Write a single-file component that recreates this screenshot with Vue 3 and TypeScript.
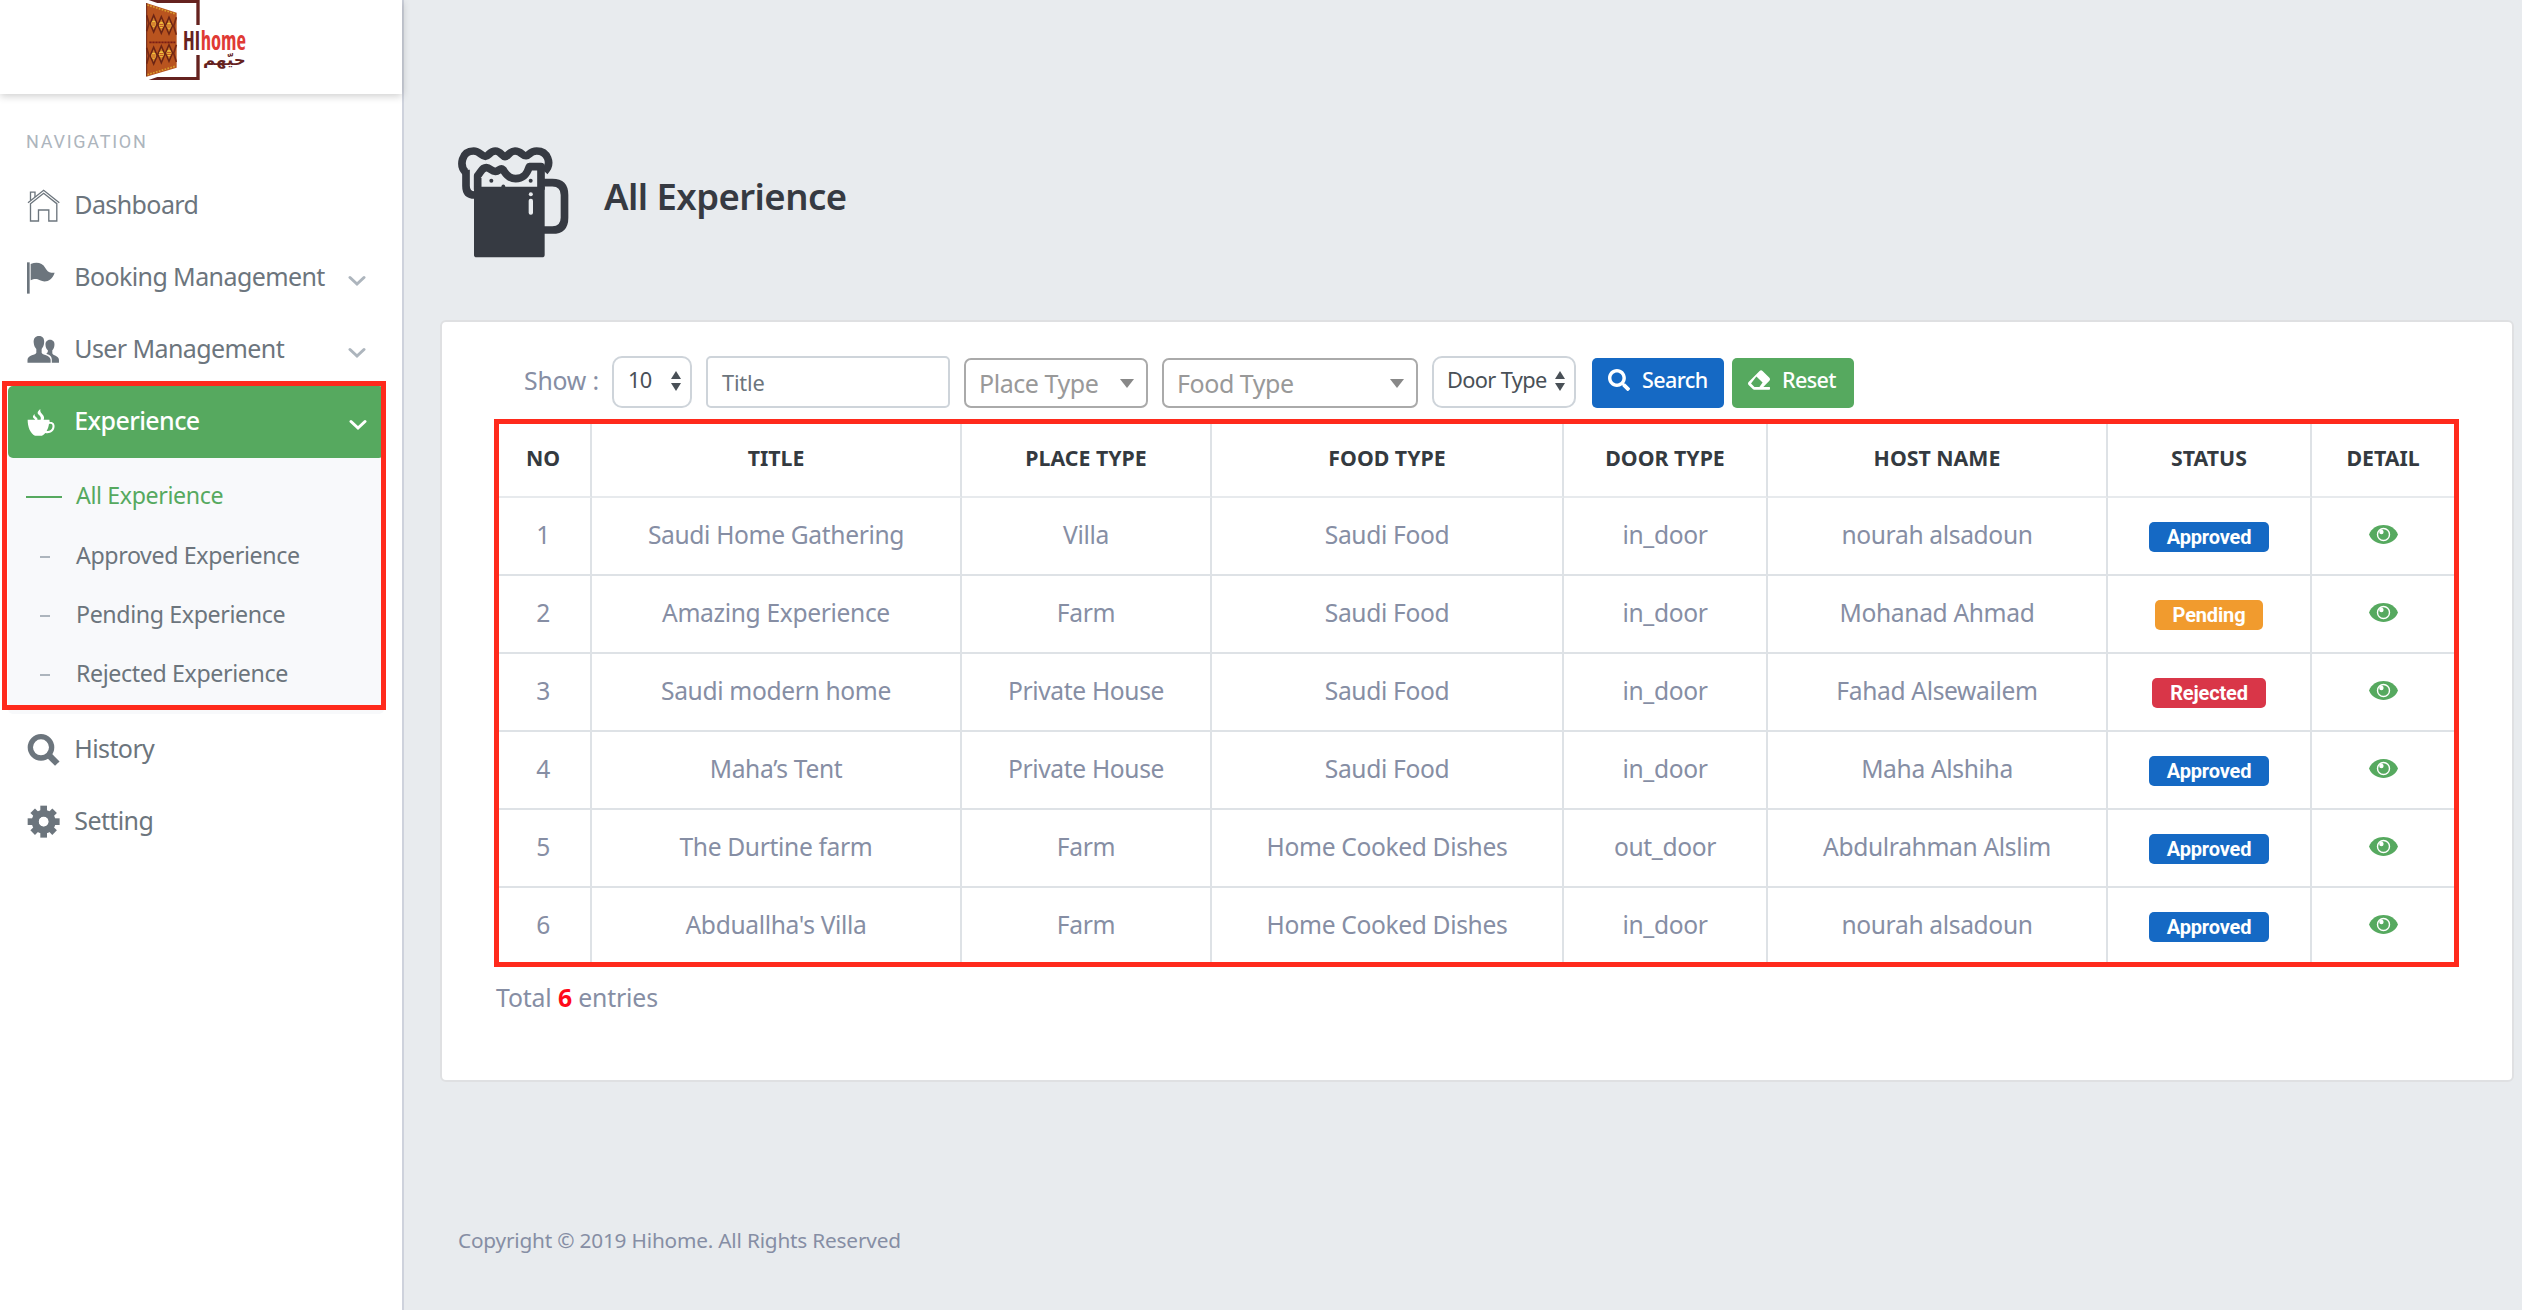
<script setup lang="ts">
interface Row {
  no: number
  title: string
  place: string
  food: string
  door: string
  host: string
  status: 'Approved' | 'Pending' | 'Rejected'
}

const columns: { label: string; width: number }[] = [
  { label: 'NO', width: 96 },
  { label: 'TITLE', width: 370 },
  { label: 'PLACE TYPE', width: 250 },
  { label: 'FOOD TYPE', width: 352 },
  { label: 'DOOR TYPE', width: 204 },
  { label: 'HOST NAME', width: 340 },
  { label: 'STATUS', width: 204 },
  { label: 'DETAIL', width: 144 },
]

const rows: Row[] = [
  { no: 1, title: 'Saudi Home Gathering', place: 'Villa', food: 'Saudi Food', door: 'in_door', host: 'nourah alsadoun', status: 'Approved' },
  { no: 2, title: 'Amazing Experience', place: 'Farm', food: 'Saudi Food', door: 'in_door', host: 'Mohanad Ahmad', status: 'Pending' },
  { no: 3, title: 'Saudi modern home', place: 'Private House', food: 'Saudi Food', door: 'in_door', host: 'Fahad Alsewailem', status: 'Rejected' },
  { no: 4, title: 'Maha’s Tent', place: 'Private House', food: 'Saudi Food', door: 'in_door', host: 'Maha Alshiha', status: 'Approved' },
  { no: 5, title: 'The Durtine farm', place: 'Farm', food: 'Home Cooked Dishes', door: 'out_door', host: 'Abdulrahman Alslim', status: 'Approved' },
  { no: 6, title: "Abduallha's Villa", place: 'Farm', food: 'Home Cooked Dishes', door: 'in_door', host: 'nourah alsadoun', status: 'Approved' },
]

const subItems = ['All Experience', 'Approved Experience', 'Pending Experience', 'Rejected Experience']
const gearTeeth = [0, 45, 90, 135, 180, 225, 270, 315]
const motifs = [
  { x: 23, y: 71 }, { x: 46, y: 75 }, { x: 69, y: 77 },
  { x: 23, y: 167 }, { x: 46, y: 163 }, { x: 69, y: 159 },
]
</script>

<template>
  <div class="app">
    <aside class="sidebar">
      <header class="brand">
        <svg class="logo" viewBox="0 0 324 240" width="108" height="80">
          <path d="M8 0 H161 V75 H151 V9 H34 Z" fill="#65221f" />
          <path d="M8 240 H161 V165 H151 V231 H34 Z" fill="#65221f" />
          <path d="M1 9 L92 38 V203 L1 230 Z" fill="#b9541f" />
          <path d="M4 15 L90 42 M4 224 L90 198" stroke="#d9a02e" stroke-width="5" stroke-dasharray="5 4" fill="none" />
          <path d="M10 127 H88" stroke="#7a1d15" stroke-width="5" stroke-dasharray="7 2" />
          <g v-for="(m, i) in motifs" :key="i" :transform="`translate(${m.x} ${m.y})`">
            <path d="M0 -31 L13 0 L0 31 L-13 0 Z" fill="#6b2415" />
            <path d="M0 -19 L8 0 L0 19 L-8 0 Z" fill="#cf7a28" />
            <ellipse rx="7" ry="9" fill="#f1c63f" />
            <path d="M-6 -2 H6 M-6 4 H6" stroke="#b3261b" stroke-width="2.5" />
          </g>
          <path d="M2 46 L9 70 L2 94 M2 143 L9 167 L2 191 M91 52 L83 78 L91 104 M91 134 L83 160 L91 186" fill="none" stroke="#7a2a14" stroke-width="5" />
          <path d="M2 9 V229" stroke="#6b2415" stroke-width="3" />
          <text class="latin" x="111" y="149" textLength="51" lengthAdjust="spacingAndGlyphs" fill="#65221f">HI</text>
          <text class="latin" x="164" y="149" textLength="136" lengthAdjust="spacingAndGlyphs" fill="#e03a35">home</text>
          <text class="arabic" x="235" y="194" text-anchor="middle" textLength="128" lengthAdjust="spacingAndGlyphs" fill="#65221f">حيّهم</text>
        </svg>
      </header>

      <nav class="nav">
        <p class="caption">NAVIGATION</p>

        <a class="item">
          <svg class="icon" viewBox="82 568 100 100" fill="none" stroke="currentColor" stroke-width="4">
            <path d="M85 609 L132 572 L179 609" />
            <path d="M92.500 612 L132 581 L171.500 612 V664 H147.500 V631 H116.500 V664 H92.500 Z" />
            <path d="M92.500 602 V577.500 H106 V592" />
          </svg>
          <span class="label">Dashboard</span>
        </a>
        <a class="item">
          <svg class="icon" viewBox="82 784 100 100" fill="currentColor">
            <path d="M82 788 h8 v94 h-8 Z" />
            <path d="M93 793 C111 786 128 789 137 805 C145 819 152 820 165 819 C158 841 139 851 121 842 C111 836 103 837 93 842 Z" />
          </svg>
          <span class="label">Booking Management</span>
          <svg class="chevron" viewBox="0 0 18 12"><path d="M2 2.500 L9 9 L16 2.500" /></svg>
        </a>
        <a class="item">
          <svg class="icon" viewBox="82 1002 100 100" fill="currentColor">
            <path d="M118 1011 C129 1011 134.500 1018 133.500 1030 C133 1041 129 1046 126 1050 V1061 C127 1068 152 1068 153 1082 V1091.500 H83.500 V1082 C84 1068 109 1068 110 1061 V1050 C106 1046 103 1041 102 1030 C101.500 1018 107 1011 118 1011 Z" />
            <path d="M151 1022 C161 1022 165 1029 164.500 1037 C164 1046 161 1050 158 1054 V1063 C159 1070 177 1070 178 1082 V1091.500 H156.500 V1081 C156 1070 148 1067 140 1064 C145 1061 145 1057 144.500 1054 C140 1050 138 1045 137.500 1037 C137 1029 142 1022 151 1022 Z" />
          </svg>
          <span class="label">User Management</span>
          <svg class="chevron" viewBox="0 0 18 12"><path d="M2 2.500 L9 9 L16 2.500" /></svg>
        </a>

        <div class="group">
          <a class="item active">
            <svg class="icon" viewBox="82 106 100 100" fill="currentColor">
              <path d="M84 150 H149 C150 153 150 155 150 157 C161 155 166 163 164.500 173 C163 186 151 193 137 190 C133 194 130 197 127 198.500 H106 C92 191 84 172 84 150 Z M148 163 C147 172 144 179 141 184 C150 185 157 180 158.500 172 C159.500 164 156 161 148 163 Z" fill-rule="evenodd" />
              <path d="M122 118 C112 127 112 131 119 137 C124 142 125 146 122 153 H131 C135 145 134 140 128 134 C123 129 121 125 122 118 Z" />
              <path d="M105 133 C98 140 99 143 104 147 C107 150 107 152 106 154 H112 C115 149 114 146 109 142 C105 139 104 137 105 133 Z" />
            </svg>
            <span class="label">Experience</span>
            <svg class="chevron" viewBox="0 0 18 12"><path d="M2 2.500 L9 9 L16 2.500" /></svg>
          </a>
          <ul class="sub">
            <li v-for="(s, i) in subItems" :key="s" :class="{ current: i === 0 }">
              <span class="dash"></span><span>{{ s }}</span>
            </li>
          </ul>
          <div class="marker nav-marker"></div>
        </div>

        <a class="item">
          <svg class="icon" viewBox="82 92 100 100" fill="none" stroke="currentColor">
            <circle cx="124" cy="135" r="32" stroke-width="16" />
            <path d="M147 158 L173 184" stroke-width="19" />
          </svg>
          <span class="label">History</span>
        </a>
        <a class="item">
          <svg class="icon" viewBox="82 309 100 100">
            <g fill="currentColor" transform="translate(132 359)">
              <path v-for="a in gearTeeth" :key="a" d="M-10 -20 V-48 H10 V-20 Z" :transform="`rotate(${a}) scale(${a % 90 ? 0.97 : 1})`" />
            </g>
            <circle cx="132" cy="359" r="25" fill="none" stroke="currentColor" stroke-width="22" />
            <circle cx="132" cy="359" r="14.500" fill="#fff" />
          </svg>
          <span class="label">Setting</span>
        </a>
      </nav>
    </aside>

    <main class="main">
      <section class="heading">
        <svg class="mug" viewBox="84 82 333 333" width="111" height="111">
          <g fill="none" stroke="#363a42" stroke-width="23" stroke-linejoin="round">
            <path d="M106 157 C88 138 94 94 131 94 C148 94 156 110 166 110 C176 110 180 94 196 94 C212 94 216 111 225 111 C234 111 238 94 255 94 C274 94 278 110 289 108 C297 108 300 94 320 94 C352 94 368 130 344 156" />
            <path d="M108 150 V198 Q108 226 134 226" />
            <path d="M143 210 V168 C152 160 154 144 169 144 C181 144 184 156 197 155 C207 155 211 142 219 150 C225 158 232 177 257 177 C283 177 292 160 298 141 H333 V210" />
            <path d="M340 189 H367 Q403.500 189 403.500 226 V294 Q403.500 331 367 331 H340" />
          </g>
          <path d="M132 201 H344 V405 Q344 413 336 413 H140 Q132 413 132 405 Z" fill="#363a42" />
          <g fill="#363a42"><circle cx="184" cy="183" r="6" /><circle cx="302" cy="183" r="6" /><circle cx="220" cy="200" r="5.500" /></g>
          <circle cx="302.500" cy="224" r="6" fill="#e8ebee" />
          <rect x="296" y="237" width="13" height="48" rx="6" fill="#e8ebee" />
        </svg>
        <h1>All Experience</h1>
      </section>

      <section class="card">
        <div class="filters">
          <span class="show">Show :</span>
          <div class="select count"><span>10</span>
            <svg viewBox="0 0 10 20" width="10" height="20"><path d="M5 0 L10 8 H0 Z M0 12 H10 L5 20 Z" /></svg>
          </div>
          <div class="input">Title</div>
          <div class="combo place"><span>Place Type</span>
            <svg viewBox="0 0 14 9" width="14" height="9"><path d="M0 0 H14 L7 9 Z" /></svg>
          </div>
          <div class="combo food"><span>Food Type</span>
            <svg viewBox="0 0 14 9" width="14" height="9"><path d="M0 0 H14 L7 9 Z" /></svg>
          </div>
          <div class="select door"><span>Door Type</span>
            <svg viewBox="0 0 10 20" width="10" height="20"><path d="M5 0 L10 8 H0 Z M0 12 H10 L5 20 Z" /></svg>
          </div>
          <button class="btn search">
            <svg viewBox="0 0 512 512" width="22" height="22"><path fill="currentColor" d="M505 442.700L405.300 343c-4.500-4.500-10.600-7-17-7H372c27.600-35.300 44-79.700 44-128C416 93.100 322.900 0 208 0S0 93.100 0 208s93.100 208 208 208c48.300 0 92.700-16.400 128-44v16.300c0 6.400 2.500 12.500 7 17l99.700 99.700c9.400 9.400 24.600 9.400 33.900 0l28.300-28.300c9.400-9.400 9.400-24.600.1-34zM208 336c-70.700 0-128-57.200-128-128 0-70.700 57.200-128 128-128 70.700 0 128 57.200 128 128 0 70.700-57.200 128-128 128z" /></svg>
            <span>Search</span>
          </button>
          <button class="btn reset">
            <svg viewBox="0 32 512 448" width="22" height="20"><path fill="currentColor" d="M497.900 273.900c18.800-18.700 18.800-49.100 0-67.900l-160-160c-18.700-18.700-49.100-18.700-67.900 0l-256 256c-18.700 18.700-18.700 49.100 0 67.900l96 96A48 48 0 0 0 144 480h356c6.600 0 12-5.400 12-12v-40c0-6.600-5.400-12-12-12H355.900l142-142.100zM195.300 172.700L339.300 316.700 265.400 416H150.600l-80-80 124.700-163.300z" /></svg>
            <span>Reset</span>
          </button>
        </div>

        <div class="table-wrap">
          <table>
            <colgroup><col v-for="c in columns" :key="c.label" :style="{ width: c.width + 'px' }" /></colgroup>
            <thead><tr><th v-for="c in columns" :key="c.label">{{ c.label }}</th></tr></thead>
            <tbody>
              <tr v-for="r in rows" :key="r.no">
                <td>{{ r.no }}</td>
                <td>{{ r.title }}</td>
                <td>{{ r.place }}</td>
                <td>{{ r.food }}</td>
                <td>{{ r.door }}</td>
                <td>{{ r.host }}</td>
                <td><div class="cell"><span class="badge" :class="r.status.toLowerCase()">{{ r.status }}</span></div></td>
                <td>
                  <div class="cell">
                    <svg class="eye" viewBox="0 0 29 19" width="29" height="19">
                      <path d="M0 9.500 C5 -3.100 24 -3.100 29 9.500 C24 22.100 5 22.100 0 9.500 Z" fill="#56a95f" />
                      <circle cx="14.500" cy="9.500" r="6" fill="none" stroke="#fff" stroke-width="1.400" />
                      <circle cx="12.400" cy="7" r="2.200" fill="#fff" />
                    </svg>
                  </div>
                </td>
              </tr>
            </tbody>
          </table>
          <div class="marker table-marker"></div>
        </div>

        <p class="total">Total <b>6</b> entries</p>
      </section>

      <footer>Copyright © 2019 Hihome. All Rights Reserved</footer>
    </main>
  </div>
</template>

<style>
body { background: #e8ebee; }
</style>

<style scoped>
.app {
  display: flex;
  width: 2522px;
  height: 1310px;
  overflow: hidden;
  background: #e8ebee;
  font-family: 'Noto Sans', 'Open Sans', sans-serif;
  font-weight: 450;
  box-sizing: border-box;
}
.app * { box-sizing: border-box; }

.sidebar {
  flex: none;
  width: 404px;
  background: #fff;
  border-right: 2px solid #ced2dc;
}
.brand {
  position: relative;
  width: 402px;
  height: 94px;
  padding-left: 146px;
  background: #fff;
  box-shadow: 0 2px 8px rgba(0, 0, 0, 0.2);
}
.logo { display: block; overflow: visible; }
.latin { font: 700 80px 'Open Sans', sans-serif; font-stretch: 75%; }
.arabic { font: 700 44px 'DejaVu Sans', sans-serif; }

.caption {
  margin: 0;
  height: 76px;
  padding: 36px 0 0 26px;
  font: 400 18px/24px Roboto, sans-serif;
  letter-spacing: 1.75px;
  color: #adb5bd;
}
.item {
  display: flex;
  align-items: center;
  height: 72px;
  padding: 0 36px 0 27px;
  color: #6c757d;
}
.icon { width: 33.300px; height: 33.300px; margin-right: 14px; flex: none; }
.label {
  flex: 1;
  padding-bottom: 4px;
  font-size: 25px;
  line-height: 34px;
  letter-spacing: -0.6px;
  white-space: nowrap;
}
.chevron { width: 18px; height: 12px; margin-top: 6px; fill: none; stroke: #adb5bd; stroke-width: 3; stroke-linecap: round; }
.group { position: relative; width: 376px; margin-left: 8px; height: 328px; background: #f8f9fb; border-radius: 5px; }
.item.active {
  padding: 0 17px 0 19px;
  color: #fff;
  background: #56a95f;
  border-radius: 5px;
}
.item.active .label { font-weight: 500; }
.item.active .chevron { stroke: #fff; }

.sub { margin: 0; padding: 8px 0 0 18px; list-style: none; }
.sub li {
  display: flex;
  align-items: center;
  height: 60px;
  font-size: 23.200px;
  letter-spacing: -0.38px;
  color: #6c757d;
  padding-bottom: 2px;
}
.sub li:nth-child(3) { height: 58px; }
.dash { width: 10px; height: 2px; margin: 4px 26px 0 14px; background: #adb5bd; }
.sub li.current { color: #56a95f; }
.current .dash { width: 36px; margin: 4px 14px 0 0; background: #56a95f; }

.marker { position: absolute; border: 5px solid #ff2a1c; pointer-events: none; }
.nav-marker { left: -6px; top: -5px; width: 384px; height: 329px; }

.main { flex: 1; padding: 147px 8px 0 36px; }
.heading { display: flex; height: 173px; padding-left: 18px; }
.heading h1 {
  margin: 22px 0 0 35px;
  font-size: 36.500px;
  line-height: 54px;
  height: 54px;
  font-weight: 600;
  letter-spacing: -0.55px;
  color: #363a42;
}
.card {
  height: 762px;
  padding: 34px 52px 0;
  background: #fff;
  border: 2px solid #dfe0e2;
  border-radius: 6px;
}
.filters { display: flex; align-items: flex-end; height: 52px; padding-left: 30px; }
.show { width: 88px; line-height: 52px; font-size: 24.800px; letter-spacing: -0.2px; color: #868ea4; height: 54px; }
.select, .input, .combo { display: flex; align-items: center; justify-content: space-between; white-space: nowrap; background: #fff; }
.select { height: 52px; border: 2px solid #ced4da; border-radius: 10px; font-size: 21.800px; color: #495057; }
.select svg, .combo svg { flex: none; fill: currentColor; }
.select span { padding-bottom: 5px; letter-spacing: -0.65px; }
.select svg { margin-bottom: 3px; }
.count { width: 80px; padding: 0 9px 0 14px; margin-right: 14px; }
.input { width: 244px; height: 52px; padding: 0 14px; border: 2px solid #ced4da; border-radius: 5px; font-size: 21.800px; letter-spacing: -0.2px; color: #6c757d; margin-right: 14px; }
.combo { height: 50px; padding: 0 12px 0 13px; border: 2px solid #aaa; border-radius: 7px; font-size: 25px; letter-spacing: -0.45px; color: #999; margin-right: 14px; }
.combo svg { fill: #888; }
.place { width: 184px; }
.food { width: 256px; }
.door { width: 144px; padding: 0 9px 0 13px; margin-right: 16px; }
.btn {
  display: flex;
  align-items: center;
  height: 50px;
  padding: 0 15px 6px;
  border: 0;
  border-radius: 5px;
  color: #fff;
  font: 500 21.500px/30px 'Noto Sans', sans-serif;
  letter-spacing: -0.6px;
}
.btn svg { margin: 0 12px 0 1px; }
.search { width: 132px; background: #1569c4; margin-right: 8px; }
.reset { width: 122px; background: #56a95f; }

.table-wrap { position: relative; margin-top: 14px; width: 1962px; }
table { width: 1962px; table-layout: fixed; border-collapse: separate; border-spacing: 0; border-left: 2px solid #dee2e6; }
th, td { padding: 0; text-align: center; border-right: 2px solid #dee2e6; border-bottom: 2px solid #dee2e6; white-space: nowrap; }
th { height: 76px; padding-bottom: 4px; font-size: 21.300px; font-weight: 700; color: #343a40; border-bottom-color: #e7eaed; }
td { height: 78px; padding-bottom: 2px; font-size: 24.600px; line-height: 34px; letter-spacing: -0.35px; color: #868ea4; }
.cell { display: flex; justify-content: center; }
.badge {
  height: 30px;
  margin-top: 3px;
  padding: 0 18px;
  border-radius: 5px;
  font: 700 20px/31px Roboto, sans-serif;
  letter-spacing: -0.15px;
  color: #fff;
}
.eye { margin-bottom: 1px; }
.approved { background: #1569c4; }
.pending { background: #f19b2e; }
.rejected { background: #d93648; }
.table-marker { left: 0; top: -3px; width: 1965px; height: 548px; }

.total { margin: 14px 0 0 2px; font-size: 24.800px; line-height: 34px; letter-spacing: -0.15px; color: #868ea4; }
.total b { color: #ff0a1a; }

footer { margin: 141px 0 0 18px; font-size: 20.800px; line-height: 34px; letter-spacing: -0.2px; color: #868ea4; }
</style>
